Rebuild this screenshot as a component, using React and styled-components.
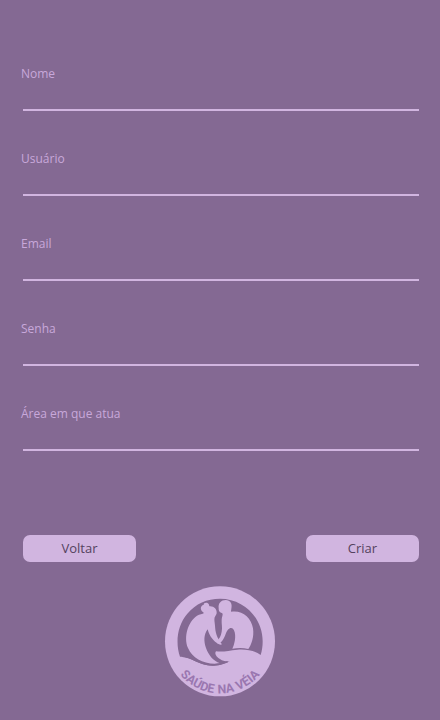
import React from "react";
import styled, { createGlobalStyle } from "styled-components";

const GlobalStyle = createGlobalStyle`
  * {
    box-sizing: border-box;
  }

  body {
    margin: 0;
    background: #846993;
    font-family: "Open Sans", "Noto Sans", sans-serif;
  }
`;

const Page = styled.main`
  display: flex;
  flex-direction: column;
  gap: 18px;
  padding: 65px 21px 20px;
`;

const Form = styled.form`
  display: flex;
  flex-direction: column;
  gap: 84px;
`;

const Fields = styled.div`
  display: flex;
  flex-direction: column;
  gap: 39px;
`;

const Field = styled.div`
  display: flex;
  flex-direction: column;
`;

const Label = styled.label`
  color: #c8a8da;
  font-size: 12px;
  line-height: 18px;
`;

const Input = styled.input`
  height: 28px;
  margin-left: 2px;
  padding: 0;
  border: 0;
  border-bottom: 2px solid #d1b5e0;
  border-radius: 0;
  outline: none;
  background: transparent;
  color: #d1b5e0;
  font: inherit;
  font-size: 13px;
`;

const Actions = styled.div`
  display: flex;
  justify-content: space-between;
  padding-left: 2px;
`;

const Button = styled.button`
  width: 113px;
  height: 27px;
  padding: 0;
  border: 0;
  border-radius: 7px;
  background: #d1b5e0;
  color: #54425e;
  font: inherit;
  font-size: 13px;
  line-height: 27px;
  cursor: pointer;
`;

const Logo = styled.svg`
  display: block;
  width: 120px;
  height: 120px;
  align-self: center;
`;

const LogoText = styled.text`
  fill: #9a77b0;
  font-family: Roboto, sans-serif;
  font-size: 37px;
  font-weight: 700;
`;

const fields = [
  { id: "nome", label: "Nome", type: "text" },
  { id: "usuario", label: "Usuário", type: "text" },
  { id: "email", label: "Email", type: "email" },
  { id: "senha", label: "Senha", type: "password" },
  { id: "area", label: "Área em que atua", type: "text" },
];

function BrandLogo() {
  return (
    <Logo viewBox="0 0 360 360" role="img" aria-label="Saúde na Véia">
      <defs>
        <path id="motto" d="M24 184A156 156 0 0 0 336 184" />
      </defs>
      <circle cx="180" cy="184" r="165" fill="#d1b5e0" />
      <path
        fill="#846993"
        d="M60 230C46 190 51 137 82 101C107 71 141 56 180 56C251 56 308 113 308 184C308 199 306 212 302 225C285 212 259 207 232 209C207 211 190 217 168 214C162 222 170 231 181 238C188 243 198 246 209 244C194 252 178 258 157 257C113 256 94 229 60 230Z"
      />
      <g fill="#d1b5e0">
        <path d="M124 91C120 83 125 75 131 75C130 67 142 66 146 72C148 75 147 78 149 79C162 78 171 88 170 99C170 103 166 107 164 112C162 119 164 126 165 137C166 156 170 173 186 193C183 195 180 195 177 193C160 184 149 170 143 148C131 163 131 185 138 204C146 226 159 242 180 250C137 256 98 237 84 204C70 170 84 125 111 107C119 102 128 103 132 99C130 97 126 95 124 91Z" />
        <path d="M176 84C174 69 184 60 197 60C211 60 218 72 214 86C214 90 212 93 214 95C247 90 274 113 279 145C283 172 274 194 265 207C247 202 231 204 217 206C227 184 229 158 219 146C211 139 201 149 197 162C192 176 186 188 173 191L170 183C178 176 183 168 185 155C188 142 184 131 185 119C185 111 190 105 187 100C179 98 175 92 176 84Z" />
      </g>
      <path
        fill="none"
        stroke="#846993"
        strokeWidth="4"
        d="M67 229C102 233 120 255 159 255C178 255 190 251 203 245"
      />
      <LogoText>
        <textPath href="#motto" startOffset="109">SAÚDE</textPath>
      </LogoText>
      <LogoText>
        <textPath href="#motto" startOffset="238">NA</textPath>
      </LogoText>
      <LogoText>
        <textPath href="#motto" startOffset="300">VÉIA</textPath>
      </LogoText>
    </Logo>
  );
}

export default function App() {
  return (
    <>
      <GlobalStyle />
      <Page>
        <Form onSubmit={(event) => event.preventDefault()}>
          <Fields>
            {fields.map((field) => (
              <Field key={field.id}>
                <Label htmlFor={field.id}>{field.label}</Label>
                <Input id={field.id} name={field.id} type={field.type} />
              </Field>
            ))}
          </Fields>
          <Actions>
            <Button type="button">Voltar</Button>
            <Button type="submit">Criar</Button>
          </Actions>
        </Form>
        <BrandLogo />
      </Page>
    </>
  );
}
